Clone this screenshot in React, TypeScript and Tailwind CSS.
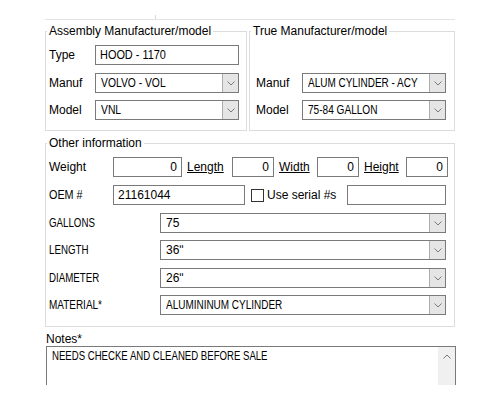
import { ReactNode } from "react";

const font = { fontFamily: '"Liberation Sans", Tahoma, sans-serif' };

// Capitals in this form are set much tighter than Arial draws them,
// so squeeze runs of upper case horizontally.
function Caps({ children, squeeze = 0.82 }: { children: ReactNode; squeeze?: number }) {
  return (
    <span className="inline-block origin-left whitespace-nowrap" style={{ transform: `scaleX(${squeeze})` }}>
      {children}
    </span>
  );
}

function Chevron({ up = false }: { up?: boolean }) {
  return (
    <svg width="8" height="5" viewBox="0 0 8 5" aria-hidden="true">
      <path
        d={up ? "M0.5 4.5 L4 1 L7.5 4.5" : "M0.5 0.5 L4 4 L7.5 0.5"}
        fill="none"
        stroke="#7a7a7a"
        strokeWidth="1"
      />
    </svg>
  );
}

function Combo({ value, width, squeeze }: { value: string; width: string; squeeze?: number }) {
  return (
    <div className={`flex h-[20px] ${width} border border-[#7a7a7a] bg-white`}>
      <div className="flex-1 overflow-hidden whitespace-nowrap pl-[5px] text-[12px] leading-[18px] text-black">
        {squeeze ? <Caps squeeze={squeeze}>{value}</Caps> : value}
      </div>
      <div className="flex w-[16px] items-center justify-center border-l border-[#adadad] bg-[#e5e5e5]">
        <Chevron />
      </div>
    </div>
  );
}

function TextBox({
  value,
  width,
  right = false,
  squeeze,
}: {
  value: string;
  width: string;
  right?: boolean;
  squeeze?: number;
}) {
  return (
    <div
      className={`h-[20px] ${width} overflow-hidden whitespace-nowrap border border-[#7a7a7a] bg-white px-[4px] text-[12px] leading-[18px] text-black ${
        right ? "text-right" : ""
      }`}
    >
      {squeeze ? <Caps squeeze={squeeze}>{value}</Caps> : value}
    </div>
  );
}

function Group({ title, className, children }: { title: string; className: string; children: ReactNode }) {
  return (
    <fieldset className={`border border-[#dcdcdc] ${className}`}>
      <legend className="ml-[1px] px-[2px] text-[12px] leading-[14px] text-black">{title}</legend>
      {children}
    </fieldset>
  );
}

function Row({
  label,
  labelWidth,
  children,
  className = "",
  squeeze,
}: {
  label: string;
  labelWidth: string;
  children: ReactNode;
  className?: string;
  squeeze?: number;
}) {
  return (
    <div className={`flex h-[20px] items-center ${className}`}>
      <span className={`${labelWidth} pl-[3px] text-[12px] text-black`}>
        {squeeze ? <Caps squeeze={squeeze}>{label}</Caps> : label}
      </span>
      {children}
    </div>
  );
}

function SizeLabel({ text, width }: { text: string; width: string }) {
  return <span className={`${width} pl-[5px] text-[12px] text-black underline`}>{text}</span>;
}

export default function App() {
  return (
    <div className="h-[400px] w-[500px] overflow-hidden bg-white" style={font}>
      {/* remnant of the panel above */}
      <div className="ml-[45px] mt-[15px] flex h-[5px] w-[410px] border-b border-[#e3e3e3]">
        <div className="ml-[110px] h-full border-l border-[#d6d6d6]" />
      </div>

      <div className="ml-[45px] mt-[4px] flex w-[410px] gap-[2px]">
        <Group title="Assembly Manufacturer/model" className="h-[107px] w-[202px]">
          <div className="flex flex-col pt-[7px]">
            <Row label="Type" labelWidth="w-[49px]">
              <TextBox value="HOOD - 1170" width="w-[144px]" squeeze={0.91} />
            </Row>
            <Row label="Manuf" labelWidth="w-[49px]" className="mt-[8px]">
              <Combo value="VOLVO - VOL" width="w-[144px]" squeeze={0.86} />
            </Row>
            <Row label="Model" labelWidth="w-[49px]" className="mt-[7px]">
              <Combo value="VNL" width="w-[144px]" squeeze={0.86} />
            </Row>
          </div>
        </Group>
        <Group title="True Manufacturer/model" className="h-[107px] w-[206px]">
          <div className="flex flex-col pt-[35px] pl-[3px]">
            <Row label="Manuf" labelWidth="w-[49px]">
              <Combo value="ALUM CYLINDER - ACY" width="w-[144px]" squeeze={0.83} />
            </Row>
            <Row label="Model" labelWidth="w-[49px]" className="mt-[7px]">
              <Combo value="75-84 GALLON" width="w-[144px]" squeeze={0.84} />
            </Row>
          </div>
        </Group>
      </div>

      <Group title="Other information" className="ml-[45px] mt-[5px] h-[191px] w-[410px]">
        <div className="flex flex-col pt-[7px]">
          <Row label="Weight" labelWidth="w-[67px]">
            <TextBox value="0" width="w-[69px]" right />
            <SizeLabel text="Length" width="w-[50px]" />
            <TextBox value="0" width="w-[42px]" right />
            <SizeLabel text="Width" width="w-[43px]" />
            <TextBox value="0" width="w-[42px]" right />
            <SizeLabel text="Height" width="w-[47px]" />
            <TextBox value="0" width="w-[42px]" right />
          </Row>
          <Row label="OEM #" labelWidth="w-[67px]" className="mt-[8px]" squeeze={0.9}>
            <TextBox value="21161044" width="w-[132px]" />
            <span className="ml-[6px] h-[13px] w-[13px] border border-[#333] bg-white" />
            <span className="ml-[3px] w-[80px] text-[12px] text-black">Use serial #s</span>
            <TextBox value="" width="w-[99px]" />
          </Row>
          <Row label="GALLONS" labelWidth="w-[114px]" className="mt-[8px]" squeeze={0.81}>
            <Combo value="75" width="w-[286px]" />
          </Row>
          <Row label="LENGTH" labelWidth="w-[114px]" className="mt-[7px]" squeeze={0.81}>
            <Combo value={"36\u02ba"} width="w-[286px]" />
          </Row>
          <Row label="DIAMETER" labelWidth="w-[114px]" className="mt-[8px]" squeeze={0.81}>
            <Combo value={"26\u02ba"} width="w-[286px]" />
          </Row>
          <Row label="MATERIAL*" labelWidth="w-[114px]" className="mt-[7px]" squeeze={0.83}>
            <Combo value="ALUMININUM CYLINDER" width="w-[286px]" squeeze={0.83} />
          </Row>
        </div>
      </Group>

      <div className="ml-[46px] mt-[5px] text-[12px] leading-[14px] text-black">Notes*</div>
      <div className="ml-[46px] flex h-[39px] w-[410px] border-x border-t border-[#7a7a7a] bg-white">
        <div className="flex-1 overflow-hidden pl-[5px] pt-[2px] text-[12px] leading-[14px] text-black">
          <Caps squeeze={0.8}>NEEDS CHECKE AND CLEANED BEFORE SALE</Caps>
        </div>
        <div className="flex w-[17px] justify-center bg-[#f0f0f0] pt-[7px]">
          <Chevron up />
        </div>
      </div>
    </div>
  );
}
